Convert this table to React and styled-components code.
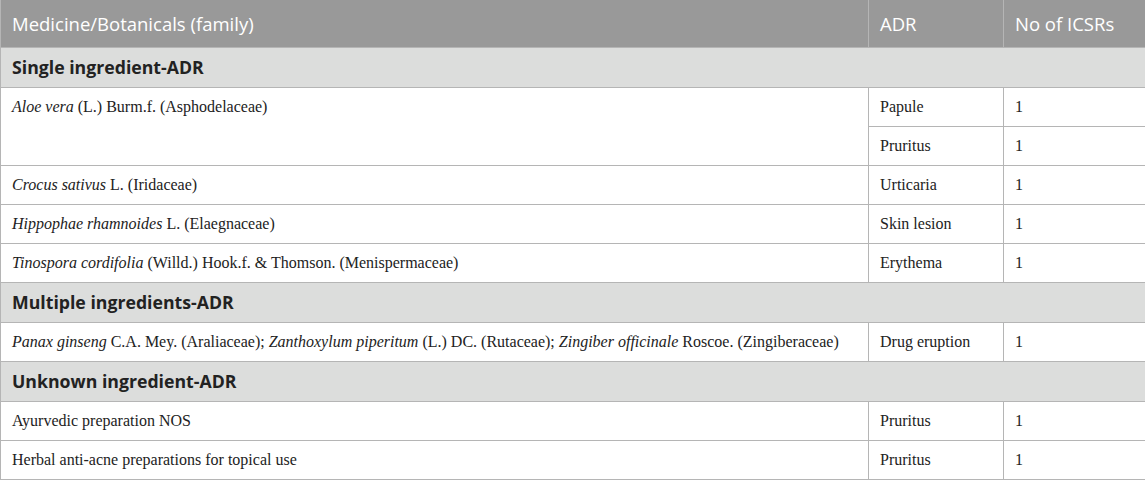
import React from "react";
import styled, { createGlobalStyle } from "styled-components";

const Global = createGlobalStyle`
  html, body { margin: 0; padding: 0; background: #fff; }
`;

const Table = styled.table`
  width: 1145px;
  border-collapse: collapse;
  table-layout: fixed;
  font-family: "Liberation Serif", "Times New Roman", serif;
  font-size: 16px;
  color: #222;
`;

const HeadCell = styled.th`
  background: #999999;
  color: #fff;
  font-family: "Open Sans", "Noto Sans", sans-serif;
  font-weight: 400;
  font-size: 18.5px;
  text-align: left;
  height: 47px;
  padding: 0 11px;
  border: 1px solid #b5b5b5;
  border-top: none;
  box-sizing: border-box;
`;

const SectionCell = styled.td`
  background: #dcdddc;
  font-family: "Open Sans", "Noto Sans", sans-serif;
  font-weight: 700;
  font-size: 17.7px;
  color: #222;
  height: 40px;
  padding: 0 11px;
  border: 1px solid #b5b5b5;
  box-sizing: border-box;
`;

const Cell = styled.td`
  height: 39px;
  padding: ${(p) => (p.$top ? "10px 11px 0" : "0 11px")};
  vertical-align: ${(p) => (p.$top ? "top" : "middle")};
  border: 1px solid #b5b5b5;
  box-sizing: border-box;
  white-space: nowrap;
`;

const Row = styled.tr``;

const sections = [
  {
    title: "Single ingredient-ADR",
    rows: [
      { name: [<i key="a">Aloe vera</i>, " (L.) Burm.f. (Asphodelaceae)"], adr: ["Papule", "Pruritus"] },
      { name: [<i key="a">Crocus sativus</i>, " L. (Iridaceae)"], adr: ["Urticaria"] },
      { name: [<i key="a">Hippophae rhamnoides</i>, " L. (Elaegnaceae)"], adr: ["Skin lesion"] },
      { name: [<i key="a">Tinospora cordifolia</i>, " (Willd.) Hook.f. & Thomson. (Menispermaceae)"], adr: ["Erythema"] },
    ],
  },
  {
    title: "Multiple ingredients-ADR",
    rows: [
      {
        name: [
          <i key="a">Panax ginseng</i>,
          " C.A. Mey. (Araliaceae); ",
          <i key="b">Zanthoxylum piperitum</i>,
          " (L.) DC. (Rutaceae); ",
          <i key="c">Zingiber officinale</i>,
          " Roscoe. (Zingiberaceae)",
        ],
        adr: ["Drug eruption"],
      },
    ],
  },
  {
    title: "Unknown ingredient-ADR",
    rows: [
      { name: ["Ayurvedic preparation NOS"], adr: ["Pruritus"] },
      { name: ["Herbal anti-acne preparations for topical use"], adr: ["Pruritus"] },
    ],
  },
];

export default function App() {
  return (
    <>
      <Global />
      <Table>
        <colgroup>
          <col style={{ width: 868 }} />
          <col style={{ width: 135 }} />
          <col style={{ width: 142 }} />
        </colgroup>
        <thead>
          <Row>
            <HeadCell>Medicine/Botanicals (family)</HeadCell>
            <HeadCell>ADR</HeadCell>
            <HeadCell>No of ICSRs</HeadCell>
          </Row>
        </thead>
        <tbody>
          {sections.map((s) => (
            <React.Fragment key={s.title}>
              <Row>
                <SectionCell colSpan={3}>{s.title}</SectionCell>
              </Row>
              {s.rows.map((r, i) =>
                r.adr.map((a, j) => (
                  <Row key={i + "-" + j}>
                    {j === 0 && (
                      <Cell rowSpan={r.adr.length} $top={r.adr.length > 1}>
                        {r.name}
                      </Cell>
                    )}
                    <Cell>{a}</Cell>
                    <Cell>1</Cell>
                  </Row>
                ))
              )}
            </React.Fragment>
          ))}
        </tbody>
      </Table>
    </>
  );
}
